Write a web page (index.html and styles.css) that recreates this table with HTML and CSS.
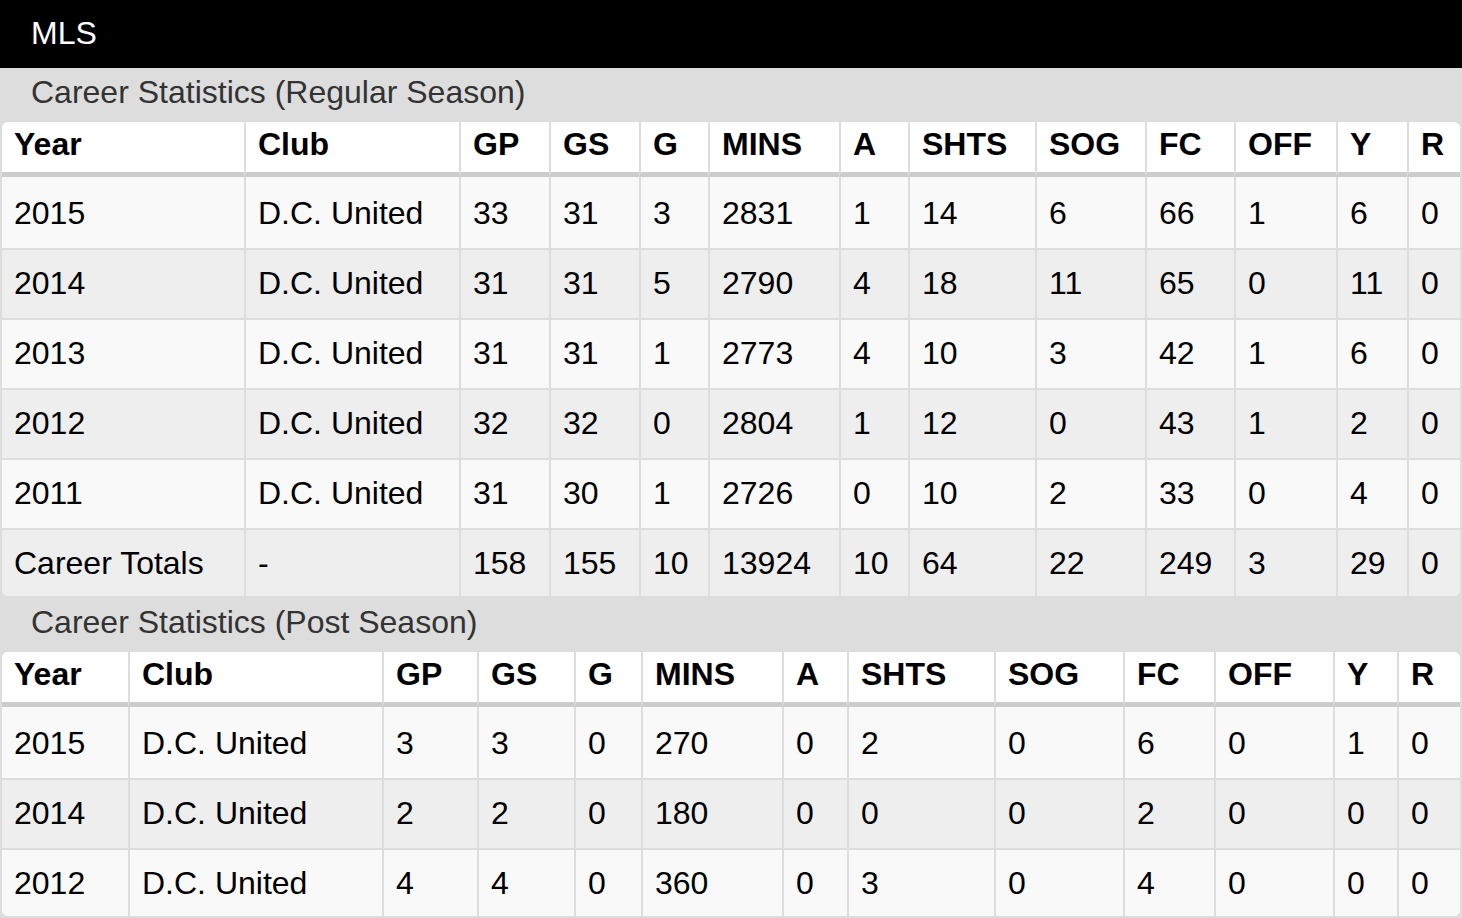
FILE: index.html
```html
<!DOCTYPE html>
<html lang="en">
<head>
<meta charset="utf-8">
<title>MLS Career Statistics</title>
<link rel="stylesheet" href="styles.css">
</head>
<body>
<div class="page">
  <header class="league-bar">
    <h1 class="league-name">MLS</h1>
  </header>

  <section class="stats-section">
    <h2 class="section-title">Career Statistics (Regular Season)</h2>
    <table class="stats stats-regular">
      <thead>
        <tr><th>Year</th><th>Club</th><th>GP</th><th>GS</th><th>G</th><th>MINS</th><th>A</th><th>SHTS</th><th>SOG</th><th>FC</th><th>OFF</th><th>Y</th><th>R</th></tr>
      </thead>
      <tbody>
        <tr><td>2015</td><td>D.C. United</td><td>33</td><td>31</td><td>3</td><td>2831</td><td>1</td><td>14</td><td>6</td><td>66</td><td>1</td><td>6</td><td>0</td></tr>
        <tr><td>2014</td><td>D.C. United</td><td>31</td><td>31</td><td>5</td><td>2790</td><td>4</td><td>18</td><td>11</td><td>65</td><td>0</td><td>11</td><td>0</td></tr>
        <tr><td>2013</td><td>D.C. United</td><td>31</td><td>31</td><td>1</td><td>2773</td><td>4</td><td>10</td><td>3</td><td>42</td><td>1</td><td>6</td><td>0</td></tr>
        <tr><td>2012</td><td>D.C. United</td><td>32</td><td>32</td><td>0</td><td>2804</td><td>1</td><td>12</td><td>0</td><td>43</td><td>1</td><td>2</td><td>0</td></tr>
        <tr><td>2011</td><td>D.C. United</td><td>31</td><td>30</td><td>1</td><td>2726</td><td>0</td><td>10</td><td>2</td><td>33</td><td>0</td><td>4</td><td>0</td></tr>
        <tr><td>Career Totals</td><td>-</td><td>158</td><td>155</td><td>10</td><td>13924</td><td>10</td><td>64</td><td>22</td><td>249</td><td>3</td><td>29</td><td>0</td></tr>
      </tbody>
    </table>
  </section>

  <section class="stats-section">
    <h2 class="section-title">Career Statistics (Post Season)</h2>
    <table class="stats stats-post">
      <thead>
        <tr><th>Year</th><th>Club</th><th>GP</th><th>GS</th><th>G</th><th>MINS</th><th>A</th><th>SHTS</th><th>SOG</th><th>FC</th><th>OFF</th><th>Y</th><th>R</th></tr>
      </thead>
      <tbody>
        <tr><td>2015</td><td>D.C. United</td><td>3</td><td>3</td><td>0</td><td>270</td><td>0</td><td>2</td><td>0</td><td>6</td><td>0</td><td>1</td><td>0</td></tr>
        <tr><td>2014</td><td>D.C. United</td><td>2</td><td>2</td><td>0</td><td>180</td><td>0</td><td>0</td><td>0</td><td>2</td><td>0</td><td>0</td><td>0</td></tr>
        <tr><td>2012</td><td>D.C. United</td><td>4</td><td>4</td><td>0</td><td>360</td><td>0</td><td>3</td><td>0</td><td>4</td><td>0</td><td>0</td><td>0</td></tr>
      </tbody>
    </table>
  </section>
</div>
</body>
</html>
```

FILE: styles.css
```css
* {
  box-sizing: border-box;
}

html,
body {
  margin: 0;
  padding: 0;
  background: #ffffff;
}

body {
  font-family: "Liberation Sans", Arial, Helvetica, sans-serif;
  font-size: 32px;
  color: #000000;
}

.league-bar {
  background: #000000;
  height: 68px;
  padding: 0 31px;
}

.league-name {
  margin: 0;
  font-size: 32px;
  font-weight: normal;
  line-height: 66px;
  color: #ffffff;
}

.stats-section {
  background: #dddddd;
}

.section-title {
  margin: 0;
  padding: 0 31px 4px;
  font-size: 32px;
  font-weight: normal;
  line-height: 48px;
  color: #333333;
}

.stats {
  width: 100%;
  table-layout: fixed;
  border-collapse: separate;
  border-spacing: 0;
  border: 2px solid #dddddd;
  border-radius: 8px;
  background: #ffffff;
}

.stats th,
.stats td {
  text-align: left;
  padding: 13px 12px 15px;
  line-height: 40px;
  border-left: 2px solid #dddddd;
  border-top: 2px solid #dddddd;
  white-space: nowrap;
  overflow: hidden;
}

.stats th:first-child,
.stats td:first-child {
  border-left: 0;
}

.stats th {
  font-weight: bold;
  padding: 2px 12px 8px;
  border-top: 0;
  border-bottom: 5px solid #cccccc;
  background: #ffffff;
}

.stats th:first-child {
  border-top-left-radius: 6px;
}

.stats th:last-child {
  border-top-right-radius: 6px;
}

.stats tbody tr:first-child td {
  border-top: 0;
  padding-top: 16px;
}

.stats tbody tr:nth-child(odd) td {
  background: #f9f9f9;
}

.stats tbody tr:nth-child(even) td {
  background: #eeeeee;
}

.stats tbody tr:last-child td {
  padding-bottom: 13px;
}

.stats tbody tr:last-child td:first-child {
  border-bottom-left-radius: 6px;
}

.stats tbody tr:last-child td:last-child {
  border-bottom-right-radius: 6px;
}

/* Regular season column widths */
.stats-regular th:nth-child(1) { width: 242px; }
.stats-regular th:nth-child(2) { width: 215px; }
.stats-regular th:nth-child(3) { width: 90px; }
.stats-regular th:nth-child(4) { width: 90px; }
.stats-regular th:nth-child(5) { width: 69px; }
.stats-regular th:nth-child(6) { width: 131px; }
.stats-regular th:nth-child(7) { width: 69px; }
.stats-regular th:nth-child(8) { width: 127px; }
.stats-regular th:nth-child(9) { width: 110px; }
.stats-regular th:nth-child(10) { width: 89px; }
.stats-regular th:nth-child(11) { width: 102px; }
.stats-regular th:nth-child(12) { width: 71px; }

/* Post season column widths */
.stats-post th:nth-child(1) { width: 126px; }
.stats-post th:nth-child(2) { width: 254px; }
.stats-post th:nth-child(3) { width: 95px; }
.stats-post th:nth-child(4) { width: 97px; }
.stats-post th:nth-child(5) { width: 67px; }
.stats-post th:nth-child(6) { width: 141px; }
.stats-post th:nth-child(7) { width: 65px; }
.stats-post th:nth-child(8) { width: 147px; }
.stats-post th:nth-child(9) { width: 129px; }
.stats-post th:nth-child(10) { width: 91px; }
.stats-post th:nth-child(11) { width: 119px; }
.stats-post th:nth-child(12) { width: 64px; }
```
